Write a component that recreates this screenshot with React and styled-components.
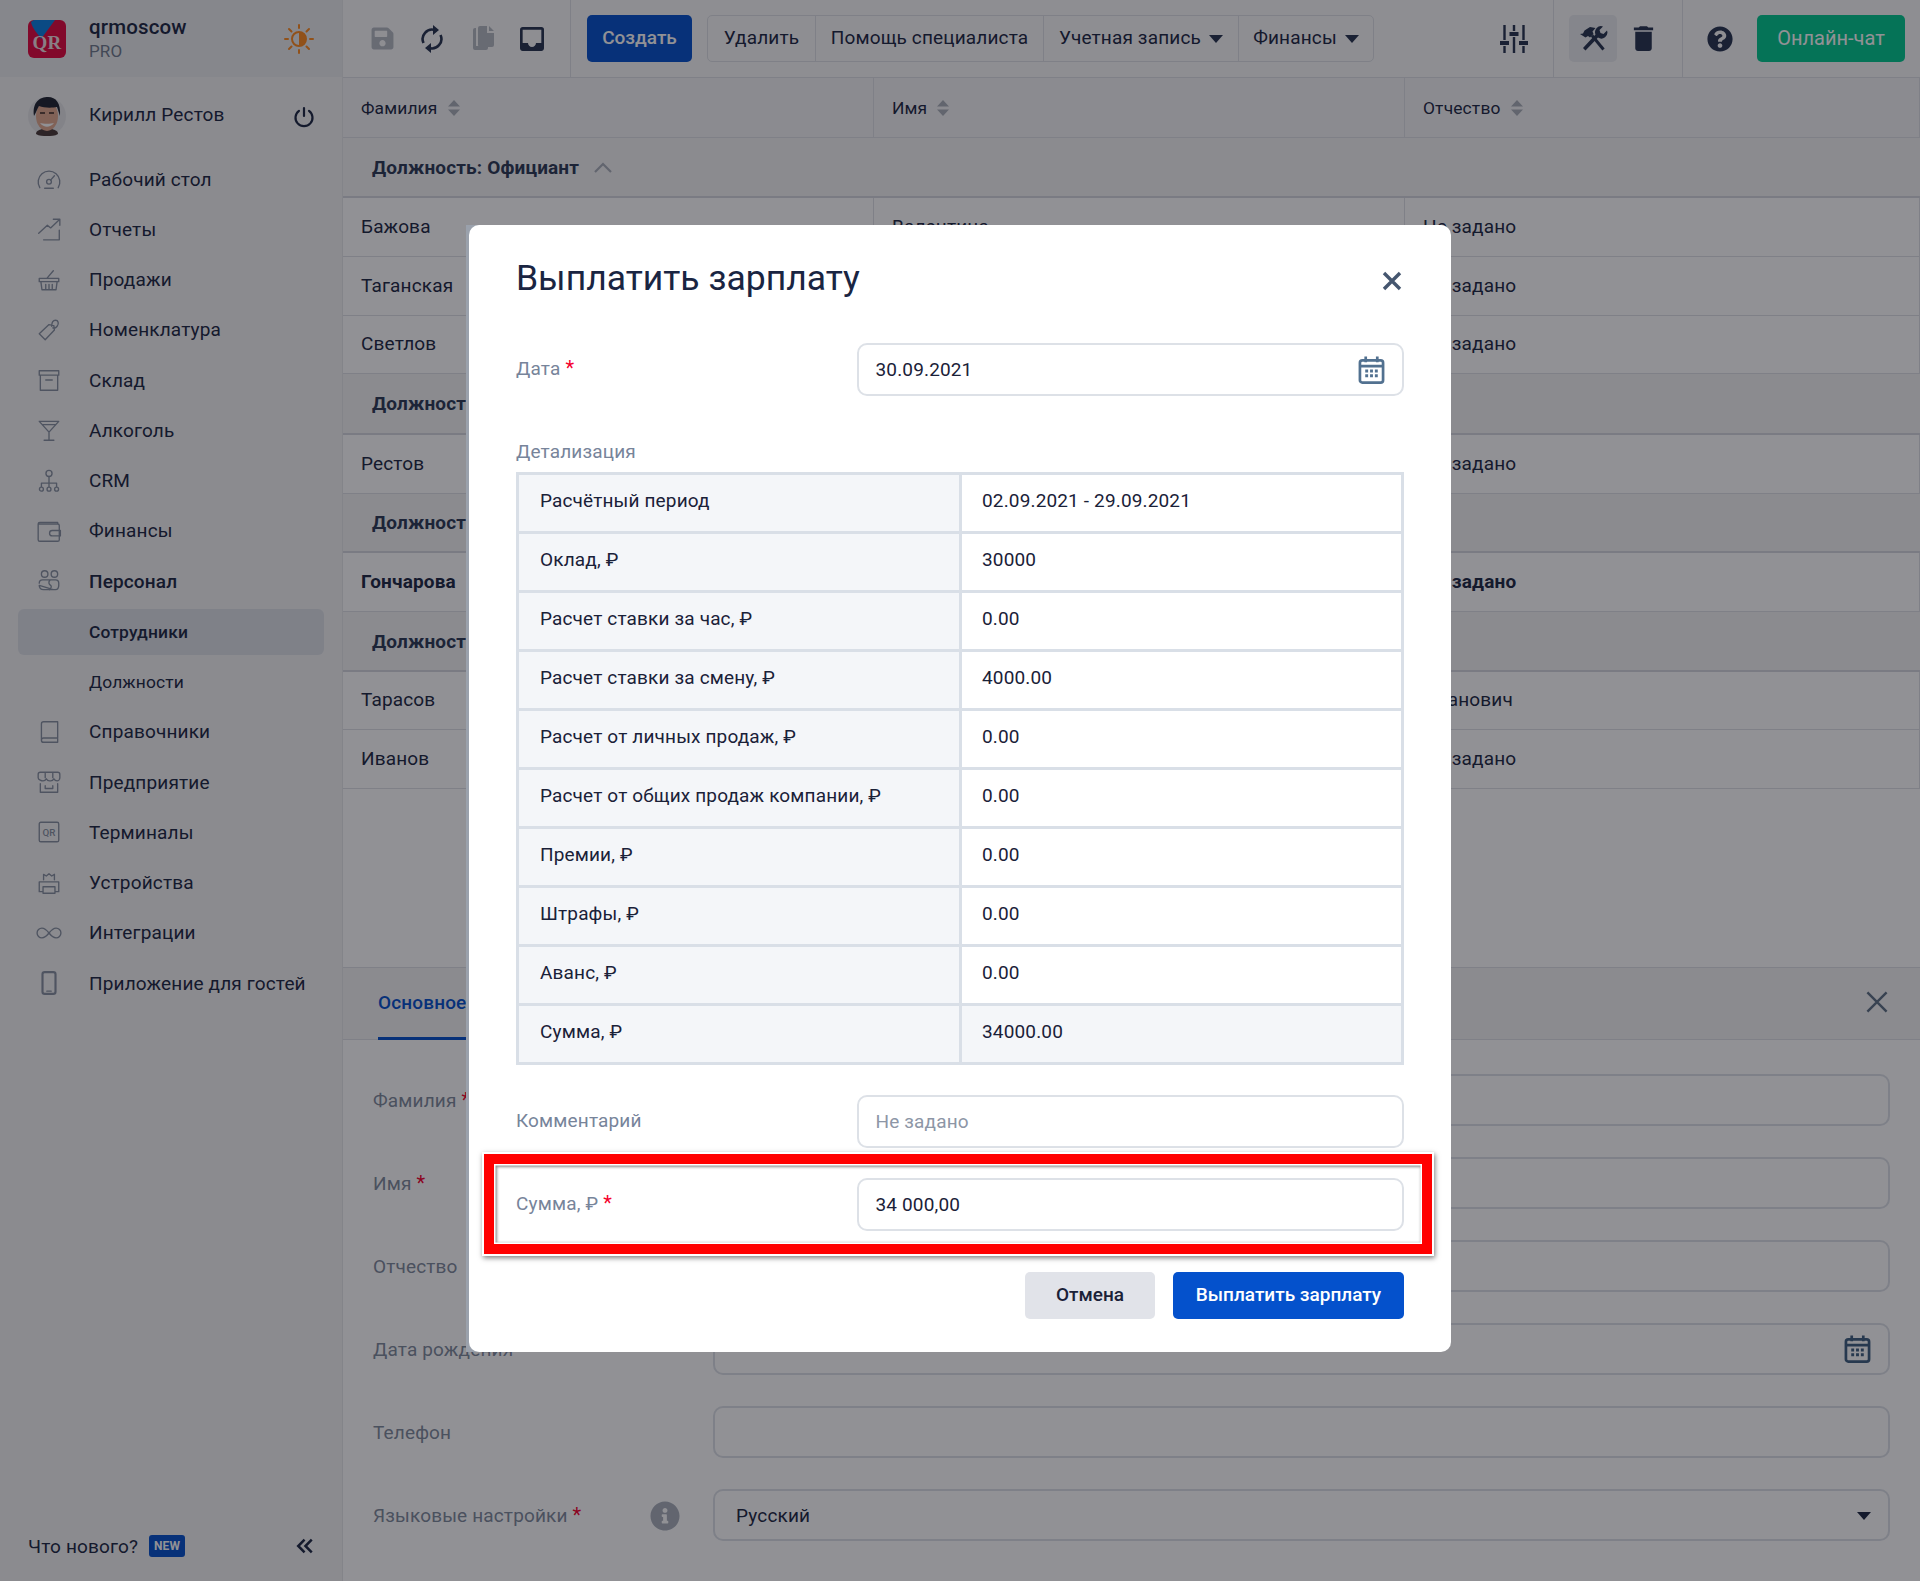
import React from 'react';
import styled, { createGlobalStyle } from 'styled-components';
import { FaSave, FaQuestionCircle, FaInfoCircle } from 'react-icons/fa';
import { MdInbox, MdDelete } from 'react-icons/md';

const GlobalStyle = createGlobalStyle`
  html, body { margin: 0; padding: 0; }
  body {
    font-family: Roboto, "Noto Sans", "Liberation Sans", sans-serif;
    font-size: 19px;
    letter-spacing: 0.15px;
    color: #1c2742;
    background: #fff;
  }
  * { box-sizing: border-box; }
`;

const Page = styled.div`
  position: relative;
  width: 1920px;
  height: 1581px;
  overflow: hidden;
  display: grid;
  grid-template-columns: 343px 1fr;
`;

/* sidebar */
const Sidebar = styled.aside`
  background: #f4f4f5;
  border-right: 1px solid #e6e7ea;
  display: flex;
  flex-direction: column;
`;

const SideHead = styled.div`
  height: 77px;
  flex: none;
  background: #ecedee;
  display: flex;
  align-items: center;
  padding-left: 28px;
`;

const Logo = styled.svg`
  width: 38px;
  height: 38px;
  flex: none;
`;

const Brand = styled.div`
  margin-left: 23px;
  flex: 1;
  display: flex;
  flex-direction: column;
  line-height: 24px;
  strong { font-size: 20.5px; font-weight: 500; }
  span { font-size: 17px; color: #6f7a8c; }
`;

const SunIcon = styled.svg`
  width: 30px;
  height: 30px;
  margin-right: 28px;
`;

const UserRow = styled.div`
  height: 77px;
  flex: none;
  display: flex;
  align-items: center;
  padding-left: 28px;
`;

const Avatar = styled.svg`
  width: 38px;
  height: 40px;
  flex: none;
`;

const UserName = styled.div`
  margin-left: 23px;
  margin-bottom: 2px;
  flex: 1;
`;

const PowerIcon = styled.svg`
  width: 22px;
  height: 22px;
  margin-right: 27px;
  margin-top: 2px;
`;

const Nav = styled.nav`
  padding: 0 18px;
  display: flex;
  flex-direction: column;
`;

const NavItem = styled.div`
  height: 50.25px;
  display: flex;
  align-items: center;
  border-radius: 6px;
  font-weight: ${p => (p.$bold ? 500 : 400)};
  font-size: ${p => (p.$sub ? '17.4px' : '19px')};
  padding-left: ${p => (p.$sub ? '71px' : '0')};
  ${p => p.$active && `
    background: #dfe2e8;
    height: 46.5px;
    margin: 2.5px 0 1.25px;
  `}
  svg {
    width: 26px;
    height: 26px;
    margin: 0 27px 0 18px;
    flex: none;
    fill: none;
    stroke: #8791a0;
    stroke-width: 1.25;
    stroke-linecap: round;
    stroke-linejoin: round;
  }
`;

const SideFoot = styled.div`
  margin-top: auto;
  height: 70px;
  padding: 0 26px 0 28px;
  display: flex;
  align-items: center;
`;

const NewBadge = styled.span`
  margin-left: 11px;
  width: 36px;
  height: 22px;
  border-radius: 3px;
  background: #0451cc;
  color: #fff;
  font-size: 12px;
  font-weight: 700;
  display: flex;
  align-items: center;
  justify-content: center;
`;

const CollapseIcon = styled.svg`
  width: 18px;
  height: 18px;
  margin-left: auto;
  margin-right: 2px;
  fill: none;
  stroke: #1c2742;
  stroke-width: 2.8;
`;

/* main column */
const Main = styled.main`
  min-width: 0;
  display: flex;
  flex-direction: column;
`;

const Toolbar = styled.div`
  height: 78px;
  flex: none;
  border-bottom: 1px solid #dfe1e5;
  display: flex;
  align-items: center;
  background: #f9f9fa;
`;

const ToolSection = styled.div`
  height: 100%;
  display: flex;
  align-items: center;
  padding: ${p => p.$pad || '0'};
  width: ${p => p.$w || 'auto'};
  border-right: ${p => (p.$line ? '1px solid #dfe1e5' : 'none')};
  margin-left: ${p => (p.$push ? 'auto' : '0')};
`;

const ToolIcon = styled.div`
  width: ${p => p.$box || '50px'};
  height: 47px;
  display: flex;
  align-items: center;
  justify-content: center;
  color: ${p => (p.$off ? '#b5bac2' : '#27344f')};
  border-radius: 5px;
  background: ${p => (p.$active ? '#e9ebee' : 'transparent')};
  svg { display: block; }
`;

const CreateButton = styled.button`
  width: 105px;
  height: 47px;
  margin-left: 16px;
  padding: 0 0 2px;
  border: 0;
  border-radius: 5px;
  background: #0451cc;
  color: #fff;
  font: 500 19px Roboto, sans-serif;
`;

const ButtonGroup = styled.div`
  margin-left: 15px;
  height: 47px;
  display: flex;
  border: 1px solid #dfe1e5;
  border-radius: 5px;
`;

const GroupButton = styled.div`
  width: ${p => p.$w}px;
  display: flex;
  align-items: center;
  justify-content: center;
  gap: 8px;
  padding-bottom: 2px;
  border-left: ${p => (p.$first ? 'none' : '1px solid #dfe1e5')};
`;

const Caret = styled.i`
  width: 0;
  height: 0;
  margin-top: 2px;
  border-left: 7.5px solid transparent;
  border-right: 7.5px solid transparent;
  border-top: 8px solid ${p => p.$color || '#27344f'};
`;

const ChatButton = styled.button`
  width: 148px;
  height: 47px;
  margin-left: 15px;
  padding: 0 0 2px;
  border: 0;
  border-radius: 5px;
  background: #00c98e;
  color: #fff;
  font: 400 20px Roboto, sans-serif;
`;

const Columns = styled.div`
  display: grid;
  grid-template-columns: 531px 531px 1fr;
`;

const HeadRow = styled(Columns)`
  height: 60px;
  background: #f5f5f6;
  border-bottom: 1px solid #dfe1e5;
  flex: none;
`;

const HeadCell = styled.div`
  display: flex;
  align-items: center;
  gap: 10px;
  padding-left: 18px;
  font-size: 17.4px;
  border-right: 1px solid #dfe1e5;
`;

const SortIcon = styled.svg`
  width: 12px;
  height: 16px;
  fill: #a9afb9;
`;

const GroupRow = styled.div`
  height: ${p => p.$h || 59}px;
  background: #f4f4f5;
  border-bottom: 2px solid #d5d8de;
  padding-left: 29px;
  display: flex;
  align-items: center;
  gap: 14px;
  font-weight: 700;
  font-size: 19px;
  color: #2c3a55;
`;

const Row = styled(Columns)`
  height: ${p => p.$h || 59}px;
  border-bottom: 1px solid #dfe1e5;
  font-weight: ${p => (p.$bold ? 700 : 400)};
`;

const Cell = styled.div`
  display: flex;
  align-items: center;
  padding: 0 0 2px 18px;
  border-right: 1px solid #dfe1e5;
  white-space: nowrap;
`;

const TableArea = styled.div`
  flex: 1;
  min-height: 0;
`;

/* lower card */
const Details = styled.section`
  height: 614px;
  flex: none;
  border-top: 1px solid #dfe1e5;
`;

const TabStrip = styled.div`
  height: 72px;
  background: #f4f4f5;
  border-bottom: 1px solid #dfe1e5;
  display: flex;
  align-items: stretch;
  justify-content: space-between;
  padding: 0 31px 0 35px;
`;

const Tab = styled.div`
  display: flex;
  align-items: center;
  font-weight: 500;
  color: #0451cc;
  border-bottom: 3px solid #0451cc;
  padding-right: 40px;
  margin-bottom: -1px;
`;

const CloseIcon = styled.svg`
  width: ${p => p.$size}px;
  height: ${p => p.$size}px;
  align-self: ${p => p.$align || 'center'};
  margin-top: ${p => p.$top || 0}px;
  margin-right: ${p => p.$right || 0}px;
  fill: none;
  stroke: ${p => p.$color};
  stroke-width: ${p => p.$weight};
`;

const DetailsForm = styled.div`
  padding: 34px 30px 0 30px;
  display: flex;
  flex-direction: column;
  gap: 31px;
`;

const DetailRow = styled.div`
  display: flex;
  align-items: center;
  height: 52px;
`;

const DetailLabel = styled.div`
  width: 340px;
  flex: none;
  color: #7f8a9c;
  display: flex;
  align-items: center;
  position: relative;
`;

const Required = styled.span`
  color: #f5002d;
  margin-left: 5px;
  font-size: 20px;
  line-height: 1;
`;

const InfoWrap = styled.span`
  position: absolute;
  left: 277px;
  top: -3px;
  color: #a9b0bb;
  font-size: 30px;
  line-height: 1;
  svg { display: block; }
`;

const DetailField = styled.div`
  flex: 1;
  height: 52px;
  border: 2px solid #dde1e7;
  border-radius: 10px;
  display: flex;
  align-items: center;
  justify-content: space-between;
  padding: 0 17px 0 21px;
`;

/* modal */
const Backdrop = styled.div`
  position: absolute;
  inset: 0;
  padding-bottom: 4px;
  background: rgba(10, 12, 20, 0.45);
  display: flex;
  align-items: center;
  justify-content: center;
`;

const ModalShell = styled.div`
  position: relative;
  padding: 0 3px;
  background: linear-gradient(to right, #9aa1ac 12px, transparent 12px);
`;

const Modal = styled.div`
  width: 982px;
  padding: 0 47px 33px;
  background: #fff;
  border-radius: 10px;
  color: #1a2138;
`;

const ModalHead = styled.div`
  height: 118px;
  padding-top: 28px;
  display: flex;
  justify-content: space-between;
  align-items: flex-start;
`;

const ModalTitle = styled.h2`
  margin: 0;
  font-size: 35.5px;
  letter-spacing: 0;
  line-height: 50px;
  font-weight: 400;
  color: #1a2542;
`;

const ModalRow = styled.div`
  display: flex;
  align-items: center;
  margin-top: ${p => p.$top || 0}px;
`;

const ModalLabel = styled.div`
  width: 340.5px;
  flex: none;
  margin-top: -3px;
  color: #77849a;
  display: flex;
  align-items: center;
`;

const ModalField = styled.div`
  width: 547.5px;
  height: 53px;
  border: 2px solid #dde1e7;
  border-radius: 10px;
  display: flex;
  align-items: center;
  justify-content: space-between;
  padding: 0 17px 0 17px;
  color: ${p => (p.$empty ? '#8d96a6' : '#1a2138')};
`;

const CalendarIcon = styled.svg`
  width: 27px;
  height: 30px;
  fill: none;
  stroke: ${p => p.$color || '#527190'};
  stroke-width: 2.8;
`;

const SectionLabel = styled.div`
  margin-top: 44px;
  height: 24px;
  line-height: 24px;
  color: #77849a;
`;

const DetailTable = styled.table`
  margin-top: 8px;
  width: 888px;
  border-collapse: collapse;
  table-layout: fixed;
  td {
    height: 59px;
    padding: 0 0 5px 20px;
    border: 3px solid #d9dfe7;
    background: #fff;
  }
  td:first-child {
    width: 443px;
    background: #f4f6f9;
    padding-left: 21px;
  }
  tr:last-child td { background: #f4f6f9; }
`;

const ModalActions = styled.div`
  margin-top: 41px;
  display: flex;
  justify-content: flex-end;
  gap: 18px;
`;

const ModalButton = styled.button`
  height: 47px;
  width: ${p => p.$w}px;
  padding: 0 0 2px;
  border: 0;
  border-radius: 5px;
  font: 500 19px Roboto, sans-serif;
  background: ${p => (p.$primary ? '#0451cc' : '#e1e3e9')};
  color: ${p => (p.$primary ? '#fff' : '#1a2138')};
`;

const RedFrame = styled.div`
  position: absolute;
  left: 18px;
  top: 929px;
  width: 948px;
  height: 100px;
  border: 10px solid #f00;
  pointer-events: none;
  box-shadow:
    0 0 0 2px #fff,
    1px 2px 5px 2px rgba(0, 0, 0, 0.5),
    inset 0 0 0 1.5px #fff,
    inset 1px 1px 3px 2px rgba(0, 0, 0, 0.45);
`;

const navIcons = {
  desk: <><path d="M3.500 20a10 10 0 1 1 17 0" /><circle cx="12" cy="14.500" r="2.200" /><path d="M13.500 13l3.500-4M8 20.500h8" /></>,
  reports: <><path d="M2.500 16l8-7.500 3 2.500 8-7.500M16 3h6v5.500M21.500 13v9H7" /><path d="M2.500 21" /></>,
  sales: <><path d="M3 10.500h18v3H3zM4.500 13.500l1 7.500h13l1-7.500M9 21v-5M12 21v-5M15 21v-5M10 10.500l6-7" /></>,
  items: <><path d="M3 15.500l9-8.500 4.500 1 .5 4-8.500 9zM14.500 8.500c0-3 1-5.500 3.500-5.500s3.500 3 1.500 5.500-3 2-4 1.500" /></>,
  stock: <><path d="M3 3.500h18v4H3zM4 7.500V21.500h16V7.500M9 12h6" /></>,
  alcohol: <><path d="M3 4h18l-9 10zM12 14v7M7.500 21.500h9M6 7h12" /></>,
  crm: <><circle cx="12" cy="5" r="2.800" /><path d="M12 8v6M5 17v-3h14v3M12 14v3" /><circle cx="5" cy="19.500" r="1.800" /><circle cx="12" cy="19.500" r="1.800" /><circle cx="19" cy="19.500" r="1.800" /></>,
  finance: <><path d="M20 5.500V4H3.500A1.500 1.500 0 0 0 2 5.500V20a1.500 1.500 0 0 0 1.500 1.500H20a1.500 1.500 0 0 0 1.500-1.500v-13a1.500 1.500 0 0 0-1.500-1.500H2M15 11.500h7.500v5H15a2.500 2.500 0 0 1 0-5z" /></>,
  staff: <><circle cx="8" cy="5.500" r="3" /><circle cx="17" cy="5.500" r="3" /><path d="M3 14c0-2 1-3 3-3h12c2 0 3 1 3 3v2c0 2-.5 4-3 4h-2M16 20H7c-3 0-4-2-4-4zM13 11c-2 2-1 4 .5 5s0 3-1 4" /></>,
  books: <><path d="M5 4.500A2 2 0 0 1 7 2.500h13v15H7a2 2 0 0 0-2 2zM5 19.500a2 2 0 0 0 2 2h13V18" /></>,
  company: <><path d="M4 3h16c1.500 0 2 1 2 2v3c0 2-1.500 3-2.500 3s-2.500-1-3-2c-.5 1-2 2-3 2h-1c-1 0-2.500-1-3-2-.5 1-2 2-3 2S2 10 2 8V5c0-1 .5-2 2-2zM8.500 4v4M15.500 4v4M4 13.500v8h16v-8M8.500 15.500v2.500h7v-2.500" /></>,
  phone: <><rect x="6" y="2" width="12" height="20" rx="2" strokeWidth="2" /><path d="M10 19.500h4" /></>,
  devices: <><path d="M7 9V4l2.500 1.500L12 3.500l2.500 2L17 4v5M3 20V11h18v9h-3.500M6.500 20H3M6.500 15.500h11v6h-11z" /></>,
  integrations: <><path d="M12 12c-2-2.500-4-4.500-6.500-4.500a4.500 4.500 0 0 0 0 9c2.500 0 4.500-2 6.500-4.500s4-4.500 6.500-4.500a4.500 4.500 0 0 1 0 9c-2.500 0-4.500-2-6.500-4.500z" /></>,
};

const TerminalIcon = () => (
  <svg viewBox="0 0 24 24">
    <path d="M7 3H4.500A1.500 1.500 0 0 0 3 4.500v15A1.500 1.500 0 0 0 4.500 21H7M17 3h2.500A1.500 1.500 0 0 1 21 4.500v15a1.500 1.500 0 0 1-1.500 1.500H17M7 3h10M7 21h10" />
    <text x="12" y="15.500" textAnchor="middle" fontSize="9" fontWeight="500" fill="#8791a0" stroke="none" fontFamily="Roboto, sans-serif">QR</text>
  </svg>
);

const NAV = [
  { label: 'Рабочий стол', icon: 'desk' },
  { label: 'Отчеты', icon: 'reports' },
  { label: 'Продажи', icon: 'sales' },
  { label: 'Номенклатура', icon: 'items' },
  { label: 'Склад', icon: 'stock' },
  { label: 'Алкоголь', icon: 'alcohol' },
  { label: 'CRM', icon: 'crm' },
  { label: 'Финансы', icon: 'finance' },
  { label: 'Персонал', icon: 'staff', bold: true },
  { label: 'Сотрудники', sub: true, active: true, bold: true },
  { label: 'Должности', sub: true },
  { label: 'Справочники', icon: 'books' },
  { label: 'Предприятие', icon: 'company' },
  { label: 'Терминалы', icon: 'terminal' },
  { label: 'Устройства', icon: 'devices' },
  { label: 'Интеграции', icon: 'integrations' },
  { label: 'Приложение для гостей', icon: 'phone' },
];

const TABLE = [
  { type: 'group', text: 'Должность: Официант', caret: true, h: 60 },
  { first: 'Бажова', second: 'Валентина', third: 'Не задано' },
  { first: 'Таганская', second: 'Ольга', third: 'Не задано' },
  { first: 'Светлов', second: 'Антон', third: 'Не задано', h: 58 },
  { type: 'group', text: 'Должность: Администратор', h: 61 },
  { first: 'Рестов', second: 'Кирилл', third: 'Не задано' },
  { type: 'group', text: 'Должность: Директор' },
  { first: 'Гончарова', second: 'Анна', third: 'Не задано', bold: true },
  { type: 'group', text: 'Должность: Повар', h: 60 },
  { first: 'Тарасов', second: 'Игорь', third: 'Иванович', h: 58 },
  { first: 'Иванов', second: 'Иван', third: 'Не задано' },
];

const PAYROLL = [
  ['Расчётный период', '02.09.2021 - 29.09.2021'],
  ['Оклад, ₽', '30000'],
  ['Расчет ставки за час, ₽', '0.00'],
  ['Расчет ставки за смену, ₽', '4000.00'],
  ['Расчет от личных продаж, ₽', '0.00'],
  ['Расчет от общих продаж компании, ₽', '0.00'],
  ['Премии, ₽', '0.00'],
  ['Штрафы, ₽', '0.00'],
  ['Аванс, ₽', '0.00'],
  ['Сумма, ₽', '34000.00'],
];

const FIELDS = [
  { label: 'Фамилия', required: true },
  { label: 'Имя', required: true },
  { label: 'Отчество' },
  { label: 'Дата рождения', calendar: true },
  { label: 'Телефон' },
  { label: 'Языковые настройки', required: true, info: true, value: 'Русский', select: true },
];

const Calendar = ({ color }) => (
  <CalendarIcon viewBox="0 0 28 30" $color={color}>
    <rect x="2" y="5" width="24" height="23" rx="2.500" />
    <path d="M2 11h24M8 1v6M20 1v6" />
    <path d="M7.500 16h3M12.500 16h3M17.500 16h3M7.500 21h3M12.500 21h3M17.500 21h3" strokeWidth="3" />
  </CalendarIcon>
);

const Sort = () => (
  <SortIcon viewBox="0 0 12 16">
    <path d="M6 0l6 6.500H0zM6 16l-6-6.500h12z" />
  </SortIcon>
);

const Close = ({ size, color, weight, top, right, align }) => (
  <CloseIcon viewBox="0 0 20 20" $size={size} $color={color} $weight={weight} $top={top} $right={right} $align={align}>
    <path d="M2 2l16 16M18 2L2 18" />
  </CloseIcon>
);

export default function App() {
  return (
    <>
      <GlobalStyle />
      <Page>
        <Sidebar>
          <SideHead>
            <Logo viewBox="0 0 38 38">
              <rect width="38" height="38" rx="6" fill="#e3093f" />
              <path d="M6 0h21L13 19C10 14 4 8 3 2z" fill="#0a7fe0" />
              <text x="19" y="29" textAnchor="middle" fontSize="19" fontWeight="700" fill="#f0dfe0" fontFamily="Liberation Serif, serif">QR</text>
            </Logo>
            <Brand>
              <strong>qrmoscow</strong>
              <span>PRO</span>
            </Brand>
            <SunIcon viewBox="0 0 30 30">
              <circle cx="15" cy="15" r="7" fill="none" stroke="#ff8a1e" strokeWidth="2" />
              <path d="M15 8a7 7 0 0 1 0 14z" fill="#ff8a1e" />
              <path d="M15 1v3M15 26v3M1 15h3M26 15h3M5 5l2.500 2.500M22.500 22.500L25 25M5 25l2.500-2.500M22.500 7.500L25 5" stroke="#ff8a1e" strokeWidth="2" strokeLinecap="round" />
            </SunIcon>
          </SideHead>
          <UserRow>
            <Avatar viewBox="0 0 38 40">
              <circle cx="19" cy="20" r="19" fill="#e5e6e8" />
              <path d="M8 38c0-3 3-4 6-5h10c3 1 6 2 6 5-3 2-7 2-11 2s-8 0-11-2z" fill="#4a3a38" />
              <ellipse cx="19" cy="20" rx="11" ry="15" fill="#e2a98e" />
              <path d="M6 20C4 6 12 1 20 1s13 6 12 19c-1-3-2-6-3-9-5 1-13 1-18-1-2 3-3 7-5 10z" fill="#1f2430" />
              <path d="M12 27c4 5 10 5 14 0-3 1-11 1-14 0z" fill="#fff" />
              <path d="M12 17h5M21 17h5" stroke="#3a2a25" strokeWidth="1.500" />
            </Avatar>
            <UserName>Кирилл Рестов</UserName>
            <PowerIcon viewBox="0 0 22 22" fill="none" stroke="#1c2742" strokeWidth="2.200" strokeLinecap="round">
              <path d="M11 2v8M6 4.800a8.500 8.500 0 1 0 10 0" />
            </PowerIcon>
          </UserRow>
          <Nav>
            {NAV.map(item => (
              <NavItem key={item.label} $bold={item.bold} $sub={item.sub} $active={item.active}>
                {item.icon === 'terminal' && <TerminalIcon />}
                {item.icon && item.icon !== 'terminal' && <svg viewBox="0 0 24 24">{navIcons[item.icon]}</svg>}
                {item.label}
              </NavItem>
            ))}
          </Nav>
          <SideFoot>
            Что нового?
            <NewBadge>NEW</NewBadge>
            <CollapseIcon viewBox="0 0 20 20">
              <path d="M9.500 3l-7 7 7 7M17.500 3l-7 7 7 7" />
            </CollapseIcon>
          </SideFoot>
        </Sidebar>

        <Main>
          <Toolbar>
            <ToolSection $line $w="228px" $pad="0 0 0 14px">
              <ToolIcon $off><FaSave size={25} /></ToolIcon>
              <ToolIcon>
                <svg width="24" height="28" viewBox="0 0 24 28" fill="none" stroke="currentColor" strokeWidth="2.600">
                  <path d="M3.500 18A9.500 9.500 0 0 1 15 5M20.500 10A9.500 9.500 0 0 1 9 23" />
                  <path d="M13 0l6 5-6 5zM11 18l-6 5 6 5z" fill="currentColor" stroke="none" />
                </svg>
              </ToolIcon>
              <ToolIcon $off>
                <svg width="24" height="26" viewBox="-3 0 24 26" fill="currentColor">
                  <path d="M0 4a2 2 0 0 1 2-2h1v18h12v2a2 2 0 0 1-2 2H2a2 2 0 0 1-2-2zM5 2a2 2 0 0 1 2-2h7v7h7v12a2 2 0 0 1-2 2H7a2 2 0 0 1-2-2zM16 0l5 5h-5z" />
                </svg>
              </ToolIcon>
              <ToolIcon><MdInbox size={32} /></ToolIcon>
            </ToolSection>
            <CreateButton>Создать</CreateButton>
            <ButtonGroup>
              <GroupButton $first $w={107}>Удалить</GroupButton>
              <GroupButton $w={228}>Помощь специалиста</GroupButton>
              <GroupButton $w={195}>Учетная запись <Caret /></GroupButton>
              <GroupButton $w={135}>Финансы <Caret /></GroupButton>
            </ButtonGroup>
            <ToolSection $push $line $w="80px">
              <ToolIcon $box="80px">
                <svg width="28" height="28" viewBox="0 0 28 28" fill="none" stroke="currentColor" strokeWidth="2.400">
                  <path d="M4.500 0v15M4.500 21v7M14 0v6M14 12v16M23.500 0v15M23.500 21v7" />
                  <path d="M0 18h9M9.500 9h9M19 18h9" strokeWidth="4" />
                </svg>
              </ToolIcon>
            </ToolSection>
            <ToolSection $line $w="129px" $pad="0 0 0 15px">
              <ToolIcon $box="48px" $active>
                <svg width="29" height="27" viewBox="0 0 29 27" fill="currentColor">
                  <path d="M13 10.500l11.500 14" fill="none" stroke="currentColor" strokeWidth="3" />
                  <path d="M1 9l3-.5 1.500-3L11 2l5.500 1-3 3.500 1 2.500-3.500 3.500-2-1.500-2.500 1.500z" />
                  <path d="M28 5.500l-3.500 3.500-3-1-1-3L24 1.500a6 6 0 0 0-7.500 8L4 23l2.500 2.500L19 12.500a6 6 0 0 0 9-7z" />
                </svg>
              </ToolIcon>
              <ToolIcon $box="52px"><MdDelete size={33} /></ToolIcon>
            </ToolSection>
            <ToolSection $pad="0 15px 0 15px">
              <ToolIcon $box="44px"><FaQuestionCircle size={26} /></ToolIcon>
              <ChatButton>Онлайн-чат</ChatButton>
            </ToolSection>
          </Toolbar>

          <HeadRow>
            <HeadCell>Фамилия <Sort /></HeadCell>
            <HeadCell>Имя <Sort /></HeadCell>
            <HeadCell>Отчество <Sort /></HeadCell>
          </HeadRow>

          <TableArea>
            {TABLE.map(row =>
              row.type === 'group' ? (
                <GroupRow key={row.text} $h={row.h}>
                  {row.text}
                  {row.caret && (
                    <svg width="20" height="12" viewBox="0 0 20 12" fill="none" stroke="#a9afb9" strokeWidth="2.200">
                      <path d="M2 11l8-8 8 8" />
                    </svg>
                  )}
                </GroupRow>
              ) : (
                <Row key={row.first} $bold={row.bold} $h={row.h}>
                  <Cell>{row.first}</Cell>
                  <Cell>{row.second}</Cell>
                  <Cell>{row.third}</Cell>
                </Row>
              )
            )}
          </TableArea>

          <Details>
            <TabStrip>
              <Tab>Основное</Tab>
              <Close size={24} color="#5d7084" weight={2} top={-3} />
            </TabStrip>
            <DetailsForm>
              {FIELDS.map(field => (
                <DetailRow key={field.label}>
                  <DetailLabel>
                    {field.label}
                    {field.required && <Required>*</Required>}
                    {field.info && <InfoWrap><FaInfoCircle size={30} /></InfoWrap>}
                  </DetailLabel>
                  <DetailField>
                    {field.value || <span />}
                    {field.calendar && <Calendar color="#3f5f80" />}
                    {field.select && <Caret $color="#1c2742" />}
                  </DetailField>
                </DetailRow>
              ))}
            </DetailsForm>
          </Details>
        </Main>

        <Backdrop>
          <ModalShell>
            <Modal>
              <ModalHead>
                <ModalTitle>Выплатить зарплату</ModalTitle>
                <Close size={20} color="#45566f" weight={3.400} top={18} right={2} align="flex-start" />
              </ModalHead>
              <ModalRow>
                <ModalLabel>Дата<Required>*</Required></ModalLabel>
                <ModalField>30.09.2021 <Calendar /></ModalField>
              </ModalRow>
              <SectionLabel>Детализация</SectionLabel>
              <DetailTable>
                <tbody>
                  {PAYROLL.map(([name, value]) => (
                    <tr key={name}>
                      <td>{name}</td>
                      <td>{value}</td>
                    </tr>
                  ))}
                </tbody>
              </DetailTable>
              <ModalRow $top={30}>
                <ModalLabel>Комментарий</ModalLabel>
                <ModalField $empty>Не задано</ModalField>
              </ModalRow>
              <ModalRow $top={30}>
                <ModalLabel>Сумма, ₽<Required>*</Required></ModalLabel>
                <ModalField>34 000,00</ModalField>
              </ModalRow>
              <ModalActions>
                <ModalButton $w={130}>Отмена</ModalButton>
                <ModalButton $w={231} $primary>Выплатить зарплату</ModalButton>
              </ModalActions>
            </Modal>
            <RedFrame />
          </ModalShell>
        </Backdrop>
      </Page>
    </>
  );
}
